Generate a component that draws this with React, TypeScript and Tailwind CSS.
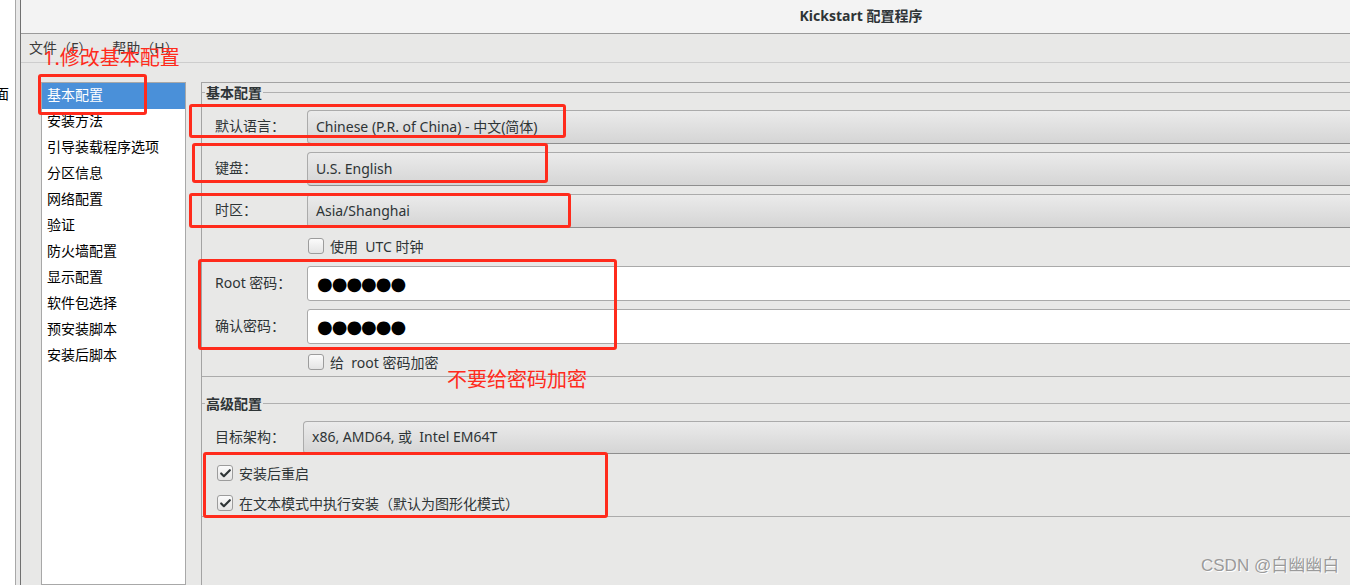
import { Check } from "lucide-react";

const menuItems = [
  "基本配置",
  "安装方法",
  "引导装载程序选项",
  "分区信息",
  "网络配置",
  "验证",
  "防火墙配置",
  "显示配置",
  "软件包选择",
  "预安装脚本",
  "安装后脚本",
];

function CheckBox({ checked }: { checked?: boolean }) {
  return (
    <span className="w-[16px] h-[16px] shrink-0 rounded-[3px] border border-[#9c9c9c] bg-gradient-to-b from-[#fbfbfb] to-[#e4e4e4] flex items-center justify-center">
      {checked && <Check size={13} strokeWidth={4} className="text-[#2e3436]" />}
    </span>
  );
}

function Combo({ text, h }: { text: string; h: string }) {
  return (
    <div
      className={`flex-1 ${h} flex items-center pl-[8px] pb-[2px] rounded-[4px] border border-[#ababab] border-b-[#8e8e8e] bg-gradient-to-b from-[#ebebeb] to-[#d5d5d5] text-[#2e3436] whitespace-pre`}
    >
      {text}
    </div>
  );
}

function PasswordInput() {
  return (
    <div className="flex-1 h-[35px] flex items-center pl-[9px] rounded-[3px] border border-[#a9a9a9] bg-white">
      <span className="font-['DejaVu_Sans'] text-[18px] leading-none text-black tracking-[-1px]">●●●●●●</span>
    </div>
  );
}

function FrameHeading({ title }: { title: string }) {
  return (
    <div className="h-[18px] flex items-center">
      <span className="w-[3px] h-px bg-[#b0b0b0]" />
      <span className="px-[1px] font-bold text-[#2e3436]">{title}</span>
      <span className="flex-1 h-px bg-[#b0b0b0]" />
    </div>
  );
}

function RedBox({ className }: { className: string }) {
  return <div className={`absolute border-[3px] border-[#ff2b1c] rounded-[3px] ${className}`} />;
}

export default function App() {
  return (
    <div className="relative w-[1350px] h-[585px] overflow-hidden flex bg-white text-[14px] font-['Noto_Sans','Noto_Sans_CJK_SC',sans-serif]">
      {/* what is left of the window behind */}
      <div className="w-[16px] shrink-0 border-r border-[#a8a8a8] bg-white pt-[84px]">
        <span className="block -ml-[5px] leading-[20px] text-black">面</span>
      </div>
      <div className="w-[5px] shrink-0 border-r border-[#707070] bg-[#e8e8e8]" />

      {/* Kickstart window */}
      <div className="w-[1680px] shrink-0 flex flex-col bg-[#e8e8e7]">
        <div className="h-[34px] shrink-0 border-b border-[#9a9a9a] bg-[#f3f3f3] flex items-center justify-center pb-[3px]">
          <span className="font-bold text-[#2e3436]">Kickstart 配置程序</span>
        </div>
        <div className="h-[29px] shrink-0 border-b border-[#cdcdcd] flex items-center pl-[8px] pb-[2px] gap-[20px] text-[#3a3a3a]">
          <span>文件（F）</span>
          <span>帮助（H）</span>
        </div>

        <div className="flex-1 flex pl-[20px] pt-[19px]">
          <aside className="w-[145px] shrink-0 border border-[#a8a8a8] bg-white">
            {menuItems.map((item, i) => (
              <div
                key={item}
                className={`h-[26px] flex items-center pl-[5px] pb-[3px] ${i === 0 ? "bg-[#4a90d9] text-white" : "text-black"}`}
              >
                {item}
              </div>
            ))}
          </aside>

          <main className="flex-1 ml-[15px] border-l border-t border-[#a3a3a3] text-[#2e3436]">
            <section className="border-b border-[#ababab] pb-[6px]">
              <FrameHeading title="基本配置" />
              <div className="mt-[9px] flex flex-col gap-[8px]">
                {[
                  ["默认语言：", "Chinese (P.R. of China) - 中文(简体)"],
                  ["键盘：", "U.S. English"],
                  ["时区：", "Asia/Shanghai"],
                ].map(([label, value]) => (
                  <div key={label} className="flex items-center">
                    <span className="w-[105px] pl-[13px] pb-[3px]">{label}</span>
                    <Combo text={value} h="h-[34px]" />
                  </div>
                ))}
              </div>
              <label className="mt-[10px] h-[16px] flex items-center gap-[6px] pl-[106px]">
                <CheckBox />
                <span>使用 &nbsp;UTC 时钟</span>
              </label>
              <div className="mt-[12px] flex flex-col gap-[8px]">
                {["Root 密码：", "确认密码："].map((label) => (
                  <div key={label} className="flex items-center">
                    <span className="w-[105px] pl-[13px] pb-[3px]">{label}</span>
                    <PasswordInput />
                  </div>
                ))}
              </div>
              <label className="mt-[10px] h-[16px] flex items-center gap-[6px] pl-[106px]">
                <CheckBox />
                <span>给 &nbsp;root 密码加密</span>
              </label>
            </section>

            <section className="mt-[17px] border-b border-[#ababab] pb-[5px]">
              <FrameHeading title="高级配置" />
              <div className="mt-[9px] flex items-center">
                <span className="w-[101px] pl-[13px] pb-[3px]">目标架构：</span>
                <Combo text="x86, AMD64, 或  Intel EM64T" h="h-[33px]" />
              </div>
              <label className="mt-[11px] h-[16px] flex items-center gap-[6px] pl-[15px]">
                <CheckBox checked />
                <span>安装后重启</span>
              </label>
              <label className="mt-[14px] h-[16px] flex items-center gap-[6px] pl-[15px]">
                <CheckBox checked />
                <span>在文本模式中执行安装（默认为图形化模式）</span>
              </label>
            </section>
          </main>
        </div>
      </div>

      {/* annotations */}
      <span className="absolute left-[43px] top-[48px] text-[20px] leading-[20px] text-[#ff2b1c]">1.修改基本配置</span>
      <RedBox className="left-[38px] top-[74px] w-[109px] h-[41px]" />
      <RedBox className="left-[189px] top-[104px] w-[377px] h-[34px]" />
      <RedBox className="left-[192px] top-[143px] w-[356px] h-[40px]" />
      <RedBox className="left-[189px] top-[193px] w-[382px] h-[35px]" />
      <RedBox className="left-[198px] top-[259px] w-[419px] h-[91px]" />
      <span className="absolute left-[447px] top-[370px] text-[20px] leading-[20px] text-[#ff2b1c]">不要给密码加密</span>
      <RedBox className="left-[203px] top-[452px] w-[405px] h-[66px]" />

      <span className="absolute left-[1201px] top-[556px] text-[17px] leading-[20px] text-[#9a9a9a] font-['Liberation_Sans','Noto_Sans_CJK_SC',sans-serif] [text-shadow:1px_1px_0_#ffffff]">
        CSDN @白幽幽白
      </span>
    </div>
  );
}
